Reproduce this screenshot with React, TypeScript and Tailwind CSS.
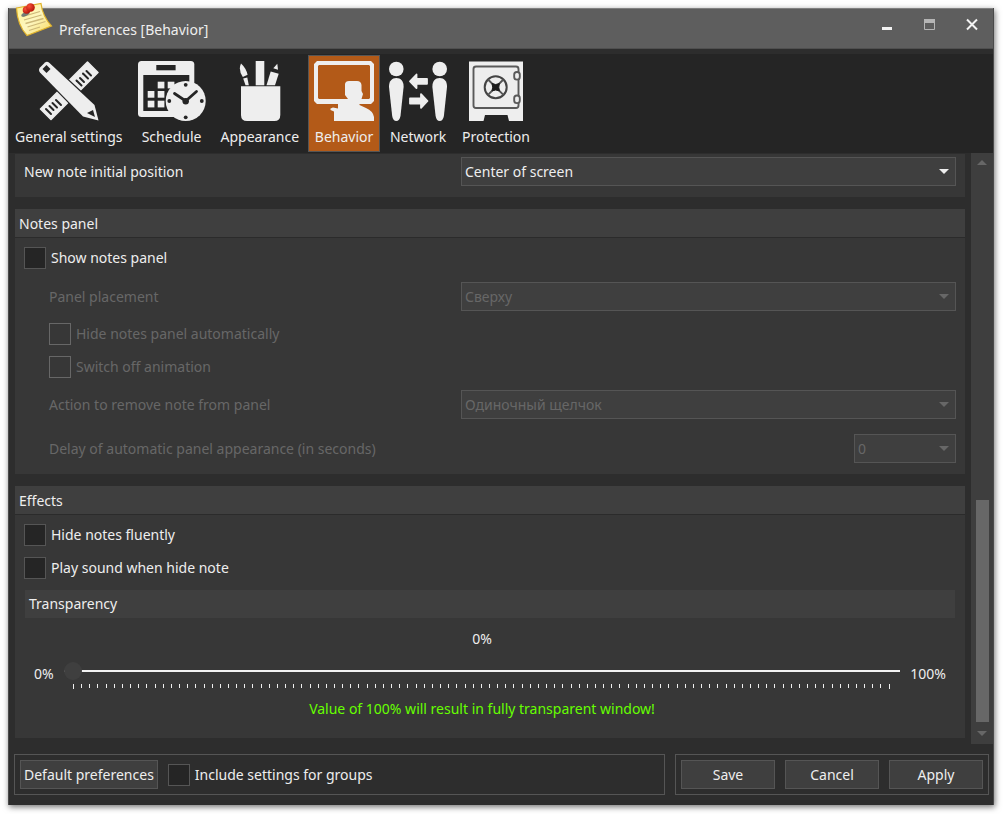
import { useState } from "react";
import type { ComponentProps, ReactNode } from "react";

const INK = "#eeeeee";
const DARK = "#252525";

function NoteIcon() {
  return (
    <svg width="38" height="36" viewBox="0 0 38 36" className="absolute -top-[6px] left-[6px]" aria-hidden="true">
      <defs>
        <linearGradient id="paper" x1="0" y1="0" x2="1" y2="1">
          <stop offset="0" stopColor="#fff38f" />
          <stop offset="0.5" stopColor="#fdf6c0" />
          <stop offset="1" stopColor="#f7d95a" />
        </linearGradient>
        <radialGradient id="pin" cx="0.35" cy="0.35" r="0.8">
          <stop offset="0" stopColor="#f8513a" />
          <stop offset="1" stopColor="#a80c00" />
        </radialGradient>
      </defs>
      <path d="M1.500 6 L26 1.500 C27 10 31 18 36.500 24 L12 33.500 C6 27 2 17 1.500 6 Z" fill="url(#paper)" stroke="#e0b32c" strokeWidth="1.200" />
      <g stroke="#cdb878" strokeWidth="1.300" fill="none">
        <path d="M8 14.500 L25 9.500" />
        <path d="M9 18 L26.500 13" />
        <path d="M10.500 21.500 L28.500 16.500" />
        <path d="M12.500 25 L30.500 19.500" />
        <path d="M14 28.500 L25 25" />
      </g>
      <ellipse cx="10.500" cy="12" rx="4.500" ry="2" fill="#51606a" opacity="0.8" transform="rotate(-25 10.500 12)" />
      <circle cx="11.500" cy="8" r="3.800" fill="url(#pin)" />
      <circle cx="15.500" cy="5.500" r="4.300" fill="url(#pin)" />
    </svg>
  );
}

function GeneralIcon() {
  return (
    <svg width="60" height="60" viewBox="0 0 60 60" aria-hidden="true">
      <path d="M48.500 1 L59 11.500 L12 58.500 L1.500 48 Z" fill={INK} stroke={INK} strokeWidth="1.500" strokeLinejoin="round" />
      <g stroke={DARK} strokeWidth="2" strokeLinecap="round">
        <path d="M7 48 L12 53" />
        <path d="M10.500 45 L14.500 49" />
        <path d="M13.500 42 L18 46.500" />
        <path d="M17 39 L22 44" />
        <path d="M37.500 19.500 L42.500 24.500" />
        <path d="M41 17 L45 21" />
        <path d="M44 12.500 L49 17.500" />
        <path d="M47.500 10 L52 14.500" />
      </g>
      <path d="M1 6.500 L6 1.500 Q8 0 10.500 2 L55.500 44 L59.500 59.500 L44 55.500 L1 11.500 Q-1 9 1 6.500 Z" fill={INK} stroke={DARK} strokeWidth="2.400" paintOrder="stroke" />
      <path d="M7.500 4 L11.500 8 L7.500 12 L3.500 8 Z" fill={DARK} />
      <path d="M48 52 L54 49 L56 56 Z" fill={DARK} />
    </svg>
  );
}

function ScheduleIcon() {
  const cells = [
    [19.7, 20.7],
    [29.7, 20.7],
    [9.7, 30],
    [19.7, 30],
    [9.7, 39.7],
    [19.7, 39.7],
  ];
  return (
    <svg width="68" height="60" viewBox="0 0 68 60" aria-hidden="true">
      <rect x="0" y="0" width="56.300" height="56" rx="3.500" fill={INK} />
      <rect x="18.300" y="4" width="19.300" height="5.300" fill={DARK} />
      <rect x="5.300" y="14" width="46" height="36" fill={DARK} />
      {cells.map(([x, y]) => (
        <rect key={`${x}-${y}`} x={x} y={y} width="6.700" height="6.700" fill={INK} />
      ))}
      <circle cx="47.700" cy="40" r="20" fill={INK} />
      <g fill={DARK}>
        <circle cx="47.700" cy="23.800" r="1.900" />
        <circle cx="47.700" cy="56.300" r="1.900" />
        <circle cx="31.300" cy="40" r="1.900" />
        <circle cx="63.800" cy="40" r="1.900" />
        <circle cx="47.700" cy="40.300" r="3.200" />
      </g>
      <path d="M36.500 32.500 L47.700 40 L58.500 30.500" fill="none" stroke={DARK} strokeWidth="2.800" strokeLinecap="round" />
    </svg>
  );
}

function AppearanceIcon() {
  return (
    <svg width="42" height="60" viewBox="0 0 42 60" fill={INK} aria-hidden="true">
      <path d="M2 25.300 H41.300 V54 Q41.300 60 35.300 60 H8 Q2 60 2 54 Z" />
      <rect x="16.700" y="0" width="8.600" height="24.300" />
      <path d="M2 2.500 Q7 7 8.600 13.800 L3.800 16 Q-1 9 2 2.500 Z" />
      <path d="M4.200 17.500 L8.300 16.500 L9.800 24.300 H6.500 Z" />
      <path d="M31.700 10.500 L39.700 12.700 L36 24.300 H27.500 Z" />
      <path d="M34.300 7.300 L38.300 2.800 L39 8.700 Z" />
    </svg>
  );
}

function BehaviorIcon() {
  return (
    <svg width="60" height="60" viewBox="0 0 60 60" aria-hidden="true">
      <path
        fillRule="evenodd"
        fill={INK}
        d="M3 0 H57 L60 3 V40 L57 43 H3 L0 40 V3 Z M5 4 L4 5 V37 L5 38 H55 L56 37 V5 L55 4 Z"
      />
      <path
        fill={INK}
        d="M31 23 Q31.500 20 35 20 H43 Q47 20 47.500 24 V30 L49 33 L47.500 38 L45.500 42 V44 L52 47 Q59 50 60 56 V60 H20 V50.500 L16.500 49 V47.500 L19 46.500 L24 47.500 V43 L33 40.500 L34 38 L31 34 Z"
      />
    </svg>
  );
}

function NetworkIcon() {
  return (
    <svg width="58" height="60" viewBox="0 0 58 60" fill={INK} aria-hidden="true">
      <circle cx="7.300" cy="8" r="7.300" />
      <path d="M7.300 17 C12 17 14.800 20.500 14.600 26 L11.500 55 Q10.500 60 7.300 60 Q4 60 3.200 55 L0 26 C-0.200 20.500 2.600 17 7.300 17 Z" />
      <circle cx="50.700" cy="8" r="7.300" />
      <path d="M50.700 17 C55.400 17 58.200 20.500 58 26 L54.900 55 Q53.900 60 50.700 60 Q47.400 60 46.600 55 L43.400 26 C43.200 20.500 46 17 50.700 17 Z" />
      <path d="M21 20.300 L27.500 13.500 V17.800 H38 V22.800 H27.500 V27 Z" stroke={INK} strokeWidth="1.800" strokeLinejoin="round" />
      <path d="M38.500 40 L32 33.200 V37.500 H21 V42.500 H32 V46.800 Z" stroke={INK} strokeWidth="1.800" strokeLinejoin="round" />
    </svg>
  );
}

function ProtectionIcon() {
  return (
    <svg width="54" height="60" viewBox="0 0 54 60" aria-hidden="true">
      <path d="M0 0.500 H54 V60 H40 L38.500 54 H16 L14.500 60 H0 Z" fill={INK} />
      <g fill="none" stroke="#5a5a5a" strokeWidth="1.900">
        <rect x="4.500" y="5.500" width="45" height="41.500" rx="2.500" />
        <rect x="45.200" y="11" width="5.600" height="7.600" rx="2.600" fill={INK} />
        <rect x="45.200" y="34.500" width="5.600" height="7.600" rx="2.600" fill={INK} />
      </g>
      <circle cx="26.700" cy="26.200" r="11" fill="none" stroke="#444444" strokeWidth="2" />
      <path d="M19 18.500 L34.400 33.900 M34.400 18.500 L19 33.900" stroke="#555555" strokeWidth="1.900" />
      <path d="M23 22.500 L26.700 23.500 L30.400 22.500 L29.800 26.200 L30.400 29.900 L26.700 29 L23 29.900 L23.700 26.200 Z" fill="#1c1c1c" stroke="#1c1c1c" />
    </svg>
  );
}

const tabs = [
  { label: "General settings", Icon: GeneralIcon },
  { label: "Schedule", Icon: ScheduleIcon },
  { label: "Appearance", Icon: AppearanceIcon },
  { label: "Behavior", Icon: BehaviorIcon },
  { label: "Network", Icon: NetworkIcon },
  { label: "Protection", Icon: ProtectionIcon },
];

function Check({ label, ...props }: { label: string } & ComponentProps<"input">) {
  return (
    <label className="flex items-center gap-[5px] has-disabled:text-[#676767]">
      <input
        type="checkbox"
        className="size-[22px] shrink-0 appearance-none border border-[#555555] bg-[#252525] checked:bg-[#b35a18] disabled:border-[#676767] disabled:bg-[#373737]"
        {...props}
      />
      {label}
    </label>
  );
}

function SelectField({
  label,
  id,
  options,
  narrow,
  ...props
}: { label: string; id: string; options: string[]; narrow?: boolean } & ComponentProps<"select">) {
  return (
    <div className="flex items-center justify-between has-disabled:text-[#676767]">
      <label htmlFor={id}>{label}</label>
      <div className={`grid items-center ${narrow ? "w-[102px]" : "w-[495px] max-w-[55%]"}`}>
        <select
          id={id}
          className="col-start-1 row-start-1 h-[29px] w-full appearance-none border border-[#555555] bg-[#3f3f3f] pr-6 pl-[3px] disabled:opacity-100"
          {...props}
        >
          {options.map((o) => (
            <option key={o}>{o}</option>
          ))}
        </select>
        <svg width="10" height="5" viewBox="0 0 10 5" className="pointer-events-none col-start-1 row-start-1 mr-[7px] justify-self-end" aria-hidden="true">
          <path d="M0 0 H10 L5 5 Z" fill="currentColor" />
        </svg>
      </div>
    </div>
  );
}

function Group({ title, children }: { title: string; children: ReactNode }) {
  return (
    <section className="bg-[#373737]">
      <h2 className="h-[29px] border-b border-[#2b2b2b] bg-[#3f3f3f] pl-1 leading-[30px]">{title}</h2>
      {children}
    </section>
  );
}

function DialogButton({ children }: { children: ReactNode }) {
  return (
    <button type="button" className="h-[29px] w-[94px] border border-[#555555] bg-[#3f3f3f]">
      {children}
    </button>
  );
}

export default function App() {
  const [tab, setTab] = useState("Behavior");
  const [transparency, setTransparency] = useState(0);
  return (
    <div className="flex min-h-screen bg-white pt-2 pr-[9px] pb-[9px] pl-2 font-['Noto_Sans','Open_Sans',sans-serif] text-sm leading-5 text-[#eeeeee]">
      <div className="relative flex flex-1 flex-col border-x border-[#4a4a4a] bg-[#2d2d2d] shadow-[1px_2px_6px_rgba(0,0,0,0.55)]">
        <header className="flex h-[41px] items-start justify-between border-t border-b border-t-[#808080] border-b-[#4f4f4f] bg-[#5e5e5e]">
          <NoteIcon />
          <h1 className="pt-[11px] pl-[50px]">Preferences [Behavior]</h1>
          <div className="flex pt-2 pr-[15px]">
            <button type="button" aria-label="Minimize" className="mr-[31px]">
              <svg width="12" height="14" viewBox="0 0 12 14">
                <rect x="2" y="10" width="10" height="3" fill="#f2f2f2" />
              </svg>
            </button>
            <button type="button" aria-label="Maximize" className="mr-[31px]">
              <svg width="12" height="14" viewBox="0 0 12 14">
                <path d="M1.500 2.500 H11.500 V12.500 H1.500 Z" fill="none" stroke="#b5b5b5" />
                <rect x="1" y="2" width="11" height="4" fill="#b5b5b5" />
              </svg>
            </button>
            <button type="button" aria-label="Close">
              <svg width="12" height="14" viewBox="0 0 12 14">
                <path d="M1 2.500 L11 12.500 M11 2.500 L1 12.500" stroke="#f2f2f2" strokeWidth="2" />
              </svg>
            </button>
          </div>
        </header>

        <nav className="mt-[5px] flex h-[99px] gap-[3px] bg-[#252525] pt-px pb-px">
          {tabs.map(({ label, Icon }) => (
            <button
              key={label}
              type="button"
              aria-pressed={tab === label}
              onClick={() => setTab(label)}
              className="flex flex-col items-center gap-[6px] border border-transparent px-[5px] pt-[5px] aria-pressed:border-[#555555] aria-pressed:bg-[#b35a18]"
            >
              <Icon />
              {label}
            </button>
          ))}
        </nav>

        <main className="flex flex-1">
          <div className="flex min-w-0 flex-1 flex-col gap-3 pt-px pr-[6px] pb-[6px] pl-[6px]">
            <section className="bg-[#373737] pt-[3px] pr-[9px] pb-[11px] pl-[9px]">
              <SelectField label="New note initial position" id="position" options={["Center of screen"]} />
            </section>

            <Group title="Notes panel">
              <div className="flex flex-col px-[9px] pt-[9px] pb-[11px]">
                <Check label="Show notes panel" />
                <fieldset disabled className="mt-[13px] flex flex-col pl-[25px] text-[#676767]">
                  <SelectField label="Panel placement" id="placement" disabled options={["Сверху"]} />
                  <div className="my-3 flex flex-col gap-[11px]">
                    <Check label="Hide notes panel automatically" disabled />
                    <Check label="Switch off animation" disabled />
                  </div>
                  <SelectField label="Action to remove note from panel" id="remove" disabled options={["Одиночный щелчок"]} />
                  <div className="mt-[15px]">
                    <SelectField
                      label="Delay of automatic panel appearance (in seconds)"
                      id="delay"
                      narrow
                      disabled
                      options={["0"]}
                    />
                  </div>
                </fieldset>
              </div>
            </Group>

            <Group title="Effects">
              <div className="flex flex-col px-[9px] pt-[9px] pb-[19px]">
                <div className="flex flex-col gap-[11px]">
                  <Check label="Hide notes fluently" />
                  <Check label="Play sound when hide note" />
                </div>
                <h3 className="mt-[11px] mr-px ml-px h-7 bg-[#3f3f3f] pl-1 leading-7">Transparency</h3>
                <div className="mt-[11px] grid grid-cols-[30px_1fr_46px] pr-[10px] pl-[10px]">
                  <output htmlFor="transparency" className="col-start-2 text-center">
                    {transparency}%
                  </output>
                  <span className="col-start-1 row-start-2 pt-[15px]">0%</span>
                  <div className="col-start-2 row-start-2 flex flex-col pt-[13px]">
                    <input
                      id="transparency"
                      type="range"
                      min={0}
                      max={100}
                      value={transparency}
                      onChange={(e) => setTransparency(Number(e.target.value))}
                      aria-label="Transparency"
                      className="h-[18px] w-full appearance-none bg-[linear-gradient(#f2f2f2,#f2f2f2)] bg-[length:100%_2px] bg-center bg-no-repeat [&::-webkit-slider-thumb]:size-[18px] [&::-webkit-slider-thumb]:appearance-none [&::-webkit-slider-thumb]:rounded-full [&::-webkit-slider-thumb]:bg-[#3f3f3f]"
                    />
                    <div className="mt-[4px] flex justify-between px-[9px]" aria-hidden="true">
                      {Array.from({ length: 101 }, (_, i) => (
                        <span key={i} className="h-1 w-px bg-[#eeeeee] first:h-[5px] last:h-[5px]" />
                      ))}
                    </div>
                  </div>
                  <span className="col-start-3 row-start-2 pt-[15px] text-right">100%</span>
                  <p className="col-start-2 row-start-3 mt-[10px] text-center text-[#66ff00]">
                    Value of 100% will result in fully transparent window!
                  </p>
                </div>
              </div>
            </Group>
          </div>

          <div className="flex w-[22px] flex-col items-center bg-[#3e3e3e] pt-[7px] pb-[8px]" aria-hidden="true">
            <svg width="10" height="5" viewBox="0 0 10 5">
              <path d="M0 5 H10 L5 0 Z" fill="#676767" />
            </svg>
            <div className="flex-1" />
            <div className="h-[222px] w-[13px] bg-[#676767]" />
            <svg width="10" height="5" viewBox="0 0 10 5" className="mt-[9px]">
              <path d="M0 0 H10 L5 5 Z" fill="#676767" />
            </svg>
          </div>
        </main>

        <footer className="flex gap-[10px] pt-[10px] pr-[4px] pb-[10px] pl-[5px]">
          <div className="flex flex-1 items-center gap-[10px] border border-[#555555] p-[5px]">
            <button type="button" className="h-[29px] border border-[#555555] bg-[#3f3f3f] px-[3px]">
              Default preferences
            </button>
            <Check label="Include settings for groups" />
          </div>
          <div className="flex gap-[10px] border border-[#555555] p-[5px]">
            <DialogButton>Save</DialogButton>
            <DialogButton>Cancel</DialogButton>
            <DialogButton>Apply</DialogButton>
          </div>
        </footer>
      </div>
    </div>
  );
}
